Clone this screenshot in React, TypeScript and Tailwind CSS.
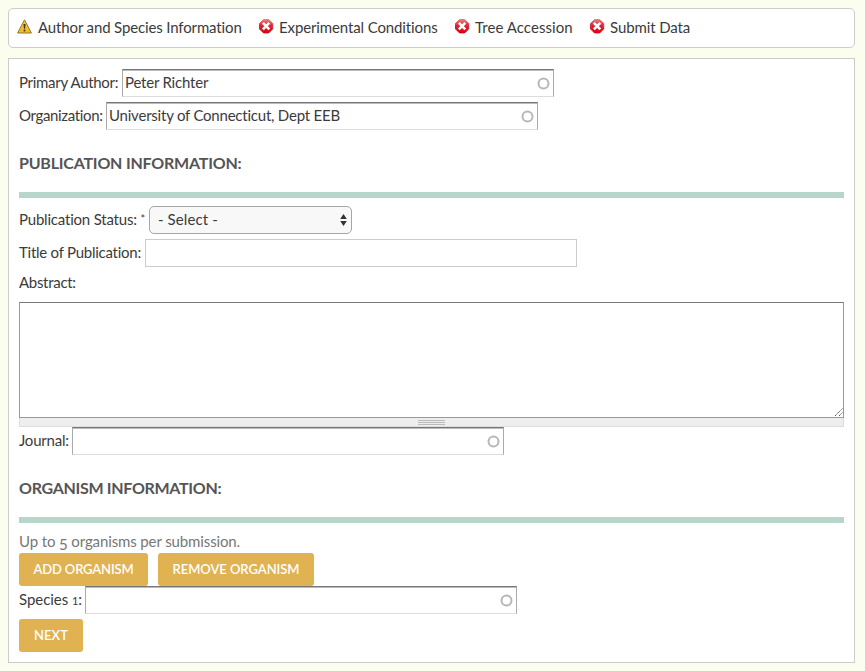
import type { ReactNode } from "react";

function Warning() {
  return (
    <svg className="mr-[5px] mb-[3px] shrink-0" width="15" height="15" viewBox="0 0 15 15">
      <defs>
        <linearGradient id="warn" x1="0" y1="0" x2="0" y2="1">
          <stop offset="0" stopColor="#f6c944" />
          <stop offset="1" stopColor="#f3b91c" />
        </linearGradient>
      </defs>
      <path d="M7.5 .8 L14.4 14 H.6 Z" fill="url(#warn)" stroke="#8f763a" strokeWidth="1" strokeLinejoin="round" />
      <path d="M6.5 5h2l-.4 4.8h-1.2z" fill="#40371d" />
      <circle cx="7.5" cy="11.6" r="1" fill="#40371d" />
    </svg>
  );
}

function ErrorIcon() {
  return (
    <svg className="mr-[5px] mb-[3px] ml-px shrink-0" width="15" height="15" viewBox="0 0 15 15">
      <defs>
        <linearGradient id="err" x1="0" y1="0" x2="0" y2="1">
          <stop offset="0" stopColor="#e88080" />
          <stop offset="0.45" stopColor="#d62a38" />
          <stop offset="1" stopColor="#dc000f" />
        </linearGradient>
      </defs>
      <path d="M4.5.5h5.2l4 4v5.4l-4 4H4.5l-4-4V4.5z" fill="url(#err)" stroke="url(#err)" strokeLinejoin="round" />
      <path d="M3.9 3.9l6.4 6.4M10.3 3.9l-6.4 6.4" stroke="#fff" strokeWidth="2.6" />
    </svg>
  );
}

function Label({ className, children }: { className: string; children: ReactNode }) {
  return <label className={`shrink-0 whitespace-nowrap ${className}`}>{children}</label>;
}

function AutoField({ value = "", className = "" }: { value?: string; className?: string }) {
  return (
    <div className="flex h-7 w-[432px] items-center justify-between border border-t-[#777] border-r-[#aaa] border-b-[#ddd] border-l-[#aaa] bg-white pr-[3px] pl-0.5 shadow-[inset_0_1px_0_#bbb]">
      <span className={`pb-0.5 whitespace-nowrap ${className}`}>{value}</span>
      <svg width="13" height="13" viewBox="0 0 13 13">
        <circle cx="6.5" cy="6.6" r="5" fill="none" stroke="#b7b7b7" strokeWidth="2" />
      </svg>
    </div>
  );
}

function Heading({ className, children }: { className: string; children: ReactNode }) {
  return <h3 className={`text-[16px] leading-6 font-bold whitespace-nowrap text-[#555] ${className}`}>{children}</h3>;
}

function Button({ className, children }: { className: string; children: ReactNode }) {
  return (
    <button className={`flex h-[33px] items-center justify-center rounded-[3px] bg-[#e0b252] pb-px text-[13px] font-semibold whitespace-nowrap text-white ${className}`}>
      {children}
    </button>
  );
}

export default function App() {
  return (
    <div className="h-[671px] w-[865px] bg-[#fbfeef] pt-2 pl-2 font-['Lato','Liberation_Sans',sans-serif] text-[15px] leading-5 text-[#3b3b3b] [font-variant-ligatures:none]">
      <nav className="flex h-10 w-[847px] items-center rounded-[5px] border border-[#ccc] bg-white pl-2">
        <div className="flex w-[241px] items-center whitespace-nowrap">
          <Warning />
          <span className="ml-px pb-0.5 tracking-[-0.14px]">Author and Species Information</span>
        </div>
        <div className="flex w-[196px] items-center whitespace-nowrap">
          <ErrorIcon />
          <span className="pb-0.5 tracking-[-0.12px]">Experimental Conditions</span>
        </div>
        <div className="flex w-[135px] items-center whitespace-nowrap">
          <ErrorIcon />
          <span className="pb-0.5 tracking-[0.05px]">Tree Accession</span>
        </div>
        <div className="flex items-center whitespace-nowrap">
          <ErrorIcon />
          <span className="pb-0.5 tracking-[-0.1px]">Submit Data</span>
        </div>
      </nav>

      <form className="mt-2.5 h-[605px] w-[847px] border border-[#ccc] bg-white px-2.5 pt-2.5">
        <div className="flex items-center">
          <Label className="w-[103px] pb-0.5 tracking-[-0.3px]">Primary Author:</Label>
          <AutoField value="Peter Richter" className="tracking-[-0.2px]" />
        </div>
        <div className="mt-[5px] flex items-center">
          <Label className="w-[87px] pb-0.5 tracking-[-0.35px]">Organization:</Label>
          <AutoField value="University of Connecticut, Dept EEB" className="tracking-[-0.22px]" />
        </div>

        <Heading className="mt-[21px] tracking-[-0.21px]">PUBLICATION INFORMATION:</Heading>
        <div className="mt-[17px] h-1.5 bg-[#b5d6c9]" />

        <div className="mt-2 flex items-center">
          <Label className="w-[130px] pb-px tracking-[-0.2px]">
            Publication Status: <span className="relative -top-0.5 text-[11px]">*</span>
          </Label>
          <div className="flex h-7 w-[203px] items-center justify-between rounded-[5px] border border-[#a6a6a6] bg-[#f8f8f8] pr-1 pl-2">
            <span className="pb-0.5 tracking-[0.1px]">- Select -</span>
            <svg width="7" height="12" viewBox="0 0 7 12" fill="#333">
              <path d="M3.5 0L6.8 5H.2zM3.5 12L.2 7h6.6z" />
            </svg>
          </div>
        </div>
        <div className="mt-[5px] flex items-center">
          <Label className="w-[126px] pb-0.5 tracking-[-0.25px]">Title of Publication:</Label>
          <div className="h-7 w-[432px] border border-[#ccc] bg-white" />
        </div>
        <div className="mt-[5px] flex">
          <Label className="pb-px tracking-[-0.3px]">Abstract:</Label>
        </div>
        <div className="mt-[9px] flex h-[116px] items-end justify-end border border-[#999] border-t-[#777] bg-white">
          <svg width="9" height="9" viewBox="0 0 9 9" stroke="#555" fill="none">
            <path d="M1 8L8.5 .5M5 8L8.5 4.5" strokeDasharray="1.4 .6" />
          </svg>
        </div>
        <div className="flex h-[9px] items-center justify-center border border-t-0 border-[#ddd] bg-[#eee]">
          <div className="flex w-[27px] flex-col gap-px">
            <div className="h-px bg-[#bbb]" />
            <div className="h-px bg-[#bbb]" />
            <div className="h-px bg-[#bbb]" />
          </div>
        </div>
        <div className="flex items-center">
          <Label className="w-[53px] pb-0.5 tracking-[-0.2px]">Journal:</Label>
          <AutoField />
        </div>

        <Heading className="mt-[21px] tracking-[-0.3px]">ORGANISM INFORMATION:</Heading>
        <div className="mt-[17px] h-1.5 bg-[#b5d6c9]" />

        <p className="mt-2 h-[22px] tracking-[-0.12px] whitespace-nowrap text-[#777]">
          Up to <span className="relative top-[3px]">5</span> organisms per submission.
        </p>
        <div className="flex gap-2.5">
          <Button className="w-[129px] tracking-[-0.15px]">ADD ORGANISM</Button>
          <Button className="w-[156px] tracking-[-0.05px]">REMOVE ORGANISM</Button>
        </div>
        <div className="flex items-center">
          <Label className="w-[66px] pb-px tracking-[-0.05px]">
            Species <span className="text-[11px]">1</span>:
          </Label>
          <AutoField />
        </div>
        <div className="mt-[5px] flex">
          <Button className="w-16">NEXT</Button>
        </div>
      </form>
    </div>
  );
}
